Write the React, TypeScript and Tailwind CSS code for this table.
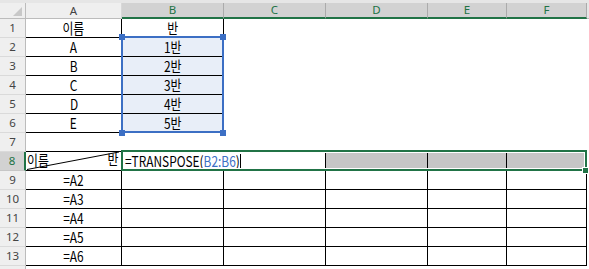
import React from "react";

type Col = { key: string; w: string };

const COLS: Col[] = [
  { key: "A", w: "w-[96px]" },
  { key: "B", w: "w-[102px]" },
  { key: "C", w: "w-[102px]" },
  { key: "D", w: "w-[102px]" },
  { key: "E", w: "w-[79px]" },
  { key: "F", w: "w-[80px]" },
];

const FONT = "font-['Noto_Sans_CJK_KR',sans-serif]";

function RowHead({ n, active }: { n?: number; active?: boolean }) {
  return (
    <div
      className={
        active
          ? "w-[26px] shrink-0 h-full flex items-center justify-center border-b border-b-[#c6c6c6] border-r-2 border-r-[#217346] bg-[#d2d2d2] text-[#217346] text-[11.5px] font-['Noto_Sans',sans-serif]"
          : "w-[26px] shrink-0 h-full flex items-center justify-center border-b border-b-[#dadada] border-r border-r-[#bcbcbc] bg-[#efefef] text-[#444444] text-[11.5px] font-['Noto_Sans',sans-serif]"
      }
    >
      {n}
    </div>
  );
}

type CellProps = {
  w: string;
  r?: boolean;
  b?: boolean;
  gray?: boolean;
  children?: React.ReactNode;
};

// narrow text face, as the sheet's default font renders
function T({ children }: { children: React.ReactNode }) {
  return <span className="inline-block scale-x-[0.82] whitespace-nowrap">{children}</span>;
}

function Cell({ w, r, b, gray, children }: CellProps) {
  return (
    <div
      className={[
        w,
        "shrink-0 h-full flex items-center justify-center text-[14.5px] text-black",
        r ? "border-r border-r-black" : "",
        b ? "border-b border-b-black" : "",
        gray ? "bg-[#c6c6c6]" : "",
      ].join(" ")}
    >
      {children !== undefined && <T>{children}</T>}
    </div>
  );
}

function Row({ n, active, children }: { n?: number; active?: boolean; children?: React.ReactNode }) {
  return (
    <div className="flex h-[19px]">
      <RowHead n={n} active={active} />
      {children}
      <div className="flex-1" />
    </div>
  );
}

const names = ["A", "B", "C", "D", "E"];

export default function App() {
  const [A, B, C, D, E, F] = COLS.map((c) => c.w);
  return (
    <div className={`relative w-[589px] h-[269px] overflow-hidden bg-white ${FONT}`}>
      {/* column header band */}
      <div className="h-[3px] bg-[#e6e6e6]" />
      <div className="flex h-[16px] font-['Noto_Sans',sans-serif]">
        <div className="relative w-[26px] shrink-0 h-full bg-[#efefef] border-r border-r-[#bcbcbc] border-b border-b-[#bcbcbc]">
          <div className="absolute right-[3px] bottom-[2px] w-0 h-0 border-l-[9px] border-l-transparent border-b-[9px] border-b-[#c8c8c8]" />
        </div>
        {COLS.map((c, i) => (
          <div
            key={c.key}
            className={
              i === 0
                ? `${c.w} shrink-0 h-full flex items-center justify-center bg-[#efefef] border-r border-r-[#d8d8d8] border-b border-b-[#bcbcbc] text-[11.5px] text-[#444444]`
                : `${c.w} shrink-0 h-full flex items-center justify-center bg-[#d2d2d2] border-r border-r-[#ababab] border-b-2 border-b-[#217346] text-[11.5px] text-[#217346]`
            }
          >
            {c.key}
          </div>
        ))}
        <div className="flex-1 bg-[#e6e6e6] border-b border-b-[#bcbcbc]" />
      </div>

      {/* rows 1-7 */}
      <Row n={1}>
        <Cell w={A} r b>이름</Cell>
        <Cell w={B} r b>반</Cell>
      </Row>
      {names.map((nm, i) => (
        <Row key={nm} n={i + 2}>
          <Cell w={A} r b>{nm}</Cell>
          <div className={`${B} shrink-0 h-full bg-[#e8eef8]`}>
            <Cell w="w-full" r b>{`${i + 1}반`}</Cell>
          </div>
        </Row>
      ))}
      <Row n={7}>
        <Cell w={A} b />
        <Cell w={B} b />
        <Cell w={C} b />
        <Cell w={D} b />
        <Cell w={E} b />
        <Cell w={F} b />
      </Row>

      {/* row 8: header cell with diagonal split and the formula being typed */}
      <Row n={8} active>
        <div className={`${A} relative shrink-0 h-full border-r border-b border-black text-[14.5px] text-black`}>
          <svg className="absolute inset-0" width="95" height="18" viewBox="0 0 95 18">
            <line x1="1" y1="17.5" x2="93" y2="0" stroke="#000" strokeWidth="1" />
          </svg>
          <span className="absolute left-[1px] top-[-1px] leading-[18px] inline-block origin-left scale-x-[0.82]">이름</span>
          <span className="absolute right-[3px] top-[-2px] leading-[18px] inline-block origin-right scale-x-[0.82]">반</span>
        </div>
        <div className={`${B} relative shrink-0 h-full border-b border-black overflow-visible`}>
          <div className="absolute left-[3px] top-0 h-full flex items-center whitespace-nowrap text-[14.5px] text-black origin-left scale-x-[0.82]">
            <span>=TRANSPOSE(</span>
            <span className="text-[#3c6fc4]">B2:B6</span>
            <span>)</span>
          </div>
          <span className="absolute left-[118px] top-[2px] w-px h-[15px] bg-black" />
        </div>
        <Cell w={C} r b />
        <Cell w={D} r b gray />
        <Cell w={E} r b gray />
        <Cell w={F} r b gray />
      </Row>

      {[2, 3, 4, 5, 6].map((k, i) => (
        <Row key={k} n={9 + i}>
          <Cell w={A} r b>{`=A${k}`}</Cell>
          <Cell w={B} r b />
          <Cell w={C} r b />
          <Cell w={D} r b />
          <Cell w={E} r b />
          <Cell w={F} r b />
        </Row>
      ))}
      <Row />

      {/* reference highlight around B2:B6 */}
      <div className="absolute left-[121px] top-[36px] w-[103px] h-[97px] border-2 border-[#3c6fc4]" />
      <div className="absolute left-[119px] top-[34px] w-[6px] h-[6px] bg-[#3c6fc4]" />
      <div className="absolute left-[220px] top-[34px] w-[6px] h-[6px] bg-[#3c6fc4]" />
      <div className="absolute left-[119px] top-[130px] w-[6px] h-[6px] bg-[#3c6fc4]" />
      <div className="absolute left-[220px] top-[130px] w-[6px] h-[6px] bg-[#3c6fc4]" />

      {/* active selection B8:F8 */}
      <div className="absolute left-[121px] top-[150px] w-[466px] h-[21px] border-2 border-[#217346]">
        <div className="w-full h-full border border-white" />
      </div>
      <div className="absolute left-[582px] top-[167px] w-[7px] h-[7px] bg-[#217346] border border-white" />
    </div>
  );
}
